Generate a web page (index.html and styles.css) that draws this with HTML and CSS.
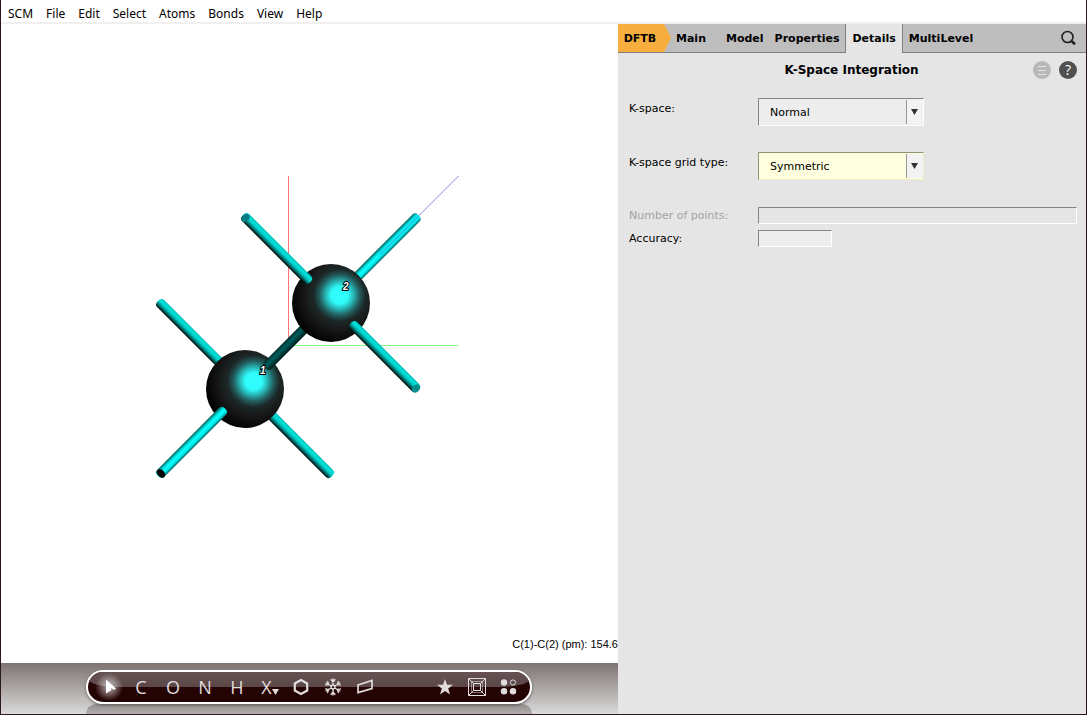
FILE: index.html
```html
<!DOCTYPE html>
<html lang="en">
<head>
<meta charset="utf-8">
<title>K-Space Integration</title>
<link rel="stylesheet" href="styles.css">
</head>
<body>
<div class="window">
  <nav class="menubar" aria-label="Main menu">
    <button type="button">SCM</button>
    <button type="button">File</button>
    <button type="button">Edit</button>
    <button type="button">Select</button>
    <button type="button">Atoms</button>
    <button type="button">Bonds</button>
    <button type="button">View</button>
    <button type="button">Help</button>
  </nav>
  <main class="workspace">
    <section class="viewer" aria-label="Structure">
      <div class="scene">
        <svg class="molecule" viewBox="1 24 617 639" role="img" aria-label="Two bonded carbon atoms">
          <defs>
            <radialGradient id="atom" cx="0.61" cy="0.4" r="0.64">
              <stop offset="0" stop-color="#30ffff"/>
              <stop offset="0.17" stop-color="#30fbfb"/>
              <stop offset="0.28" stop-color="#28b4b4"/>
              <stop offset="0.40" stop-color="#225f5f"/>
              <stop offset="0.52" stop-color="#1d2828"/>
              <stop offset="0.72" stop-color="#161616"/>
              <stop offset="1" stop-color="#000"/>
            </radialGradient>
            <linearGradient id="down" x1="0" y1="0" x2="0" y2="1">
              <stop offset="0" stop-color="#00b4b0"/>
              <stop offset="0.2" stop-color="#00e2dc"/>
              <stop offset="0.45" stop-color="#00cfca"/>
              <stop offset="0.75" stop-color="#006a68"/>
              <stop offset="1" stop-color="#000"/>
            </linearGradient>
            <linearGradient id="up" x1="0" y1="0" x2="0" y2="1">
              <stop offset="0" stop-color="#005c5c"/>
              <stop offset="0.3" stop-color="#00dede"/>
              <stop offset="0.5" stop-color="#10ffff"/>
              <stop offset="0.75" stop-color="#00e6e6"/>
              <stop offset="1" stop-color="#006060"/>
            </linearGradient>
            <linearGradient id="dark" x1="0" y1="0" x2="0" y2="1">
              <stop offset="0" stop-color="#002c2c"/>
              <stop offset="0.4" stop-color="#005e5e"/>
              <stop offset="1" stop-color="#001c1c"/>
            </linearGradient>
          </defs>
          <path d="M288.500 176V345" stroke="#ff7474"/>
          <path d="M294 345.500H458" stroke="#84f884"/>
          <rect x="0" y="-5" width="90" height="10" rx="4" fill="url(#down)" transform="translate(158 301) rotate(45)"/>
          <rect x="0" y="-5" width="92" height="10" rx="4" fill="url(#down)" transform="translate(267 411) rotate(45)"/>
          <rect x="0" y="-5" width="90" height="10" rx="4" fill="url(#up)" transform="translate(355 279) rotate(-45)"/>
          <path d="M380 254.500L458.500 176" stroke="#5858d8" stroke-width="0.7"/>
          <circle cx="245" cy="389" r="39" fill="url(#atom)"/>
          <rect x="0" y="-5" width="62" height="10" rx="4" fill="url(#dark)" transform="translate(265 368) rotate(-45)"/>
          <circle cx="331" cy="303" r="39" fill="url(#atom)"/>
          <rect x="0" y="-5" width="95" height="10" rx="4" fill="url(#down)" transform="translate(243 215) rotate(45)"/>
          <ellipse cx="245.500" cy="218" rx="4.500" ry="3.500" fill="#087e80" transform="rotate(-45 245.500 218)"/>
          <rect x="0" y="-5" width="95" height="10" rx="4" fill="url(#down)" transform="translate(351 323) rotate(45)"/>
          <ellipse cx="416" cy="388.500" rx="4.500" ry="3.500" fill="#088c8c" transform="rotate(-45 416 388.500)"/>
          <rect x="0" y="-5" width="95" height="10" rx="4" fill="url(#up)" transform="translate(158 476) rotate(-45)"/>
          <ellipse cx="161" cy="473.500" rx="3.500" ry="4.800" fill="#000" transform="rotate(-45 161 473.500)"/>
          <text class="atom-label" x="343" y="290">2</text>
          <text class="atom-label" x="260" y="374">1</text>
        </svg>
        <output class="measure">C(1)-C(2) (pm): 154.6</output>
      </div>
      <div class="dock">
        <div class="pill" role="toolbar" aria-label="Build tools">
          <button type="button" class="glow" aria-label="Pointer"><svg width="22" height="22" viewBox="0 0 22 22"><path d="M8 3.500L18 12.500L16 14L13 12L13.500 14L8 17.500Z" fill="#fff"/></svg></button>
          <button type="button">C</button>
          <button type="button">O</button>
          <button type="button">N</button>
          <button type="button">H</button>
          <button type="button" class="element-menu">X<svg width="7" height="6" viewBox="0 0 7 6"><path d="M0 0H7L3.500 6Z" fill="currentColor"/></svg></button>
          <button type="button" aria-label="Rings"><svg width="18" height="18" viewBox="0 0 18 18" fill="none" stroke="currentColor" stroke-width="2.200"><path d="M9 2L15.200 5.500V12.500L9 16L2.800 12.500V5.500Z"/></svg></button>
          <button type="button" aria-label="Crystal"><svg width="18" height="18" viewBox="-9 -9 18 18" fill="none" stroke="currentColor" stroke-width="1.400"><defs><path id="ray" d="M0 -2V-8.500M-2.300 -7.800L0 -5L2.300 -7.800M0 -2.200L1.900 -1.100"/></defs><use href="#ray"/><use href="#ray" transform="rotate(60)"/><use href="#ray" transform="rotate(120)"/><use href="#ray" transform="rotate(180)"/><use href="#ray" transform="rotate(240)"/><use href="#ray" transform="rotate(300)"/></svg></button>
          <button type="button" aria-label="Plane"><svg width="18" height="18" viewBox="0 0 18 18" fill="none" stroke="currentColor" stroke-width="1.700"><path d="M2 7L16 2.500V10.500L2 14.500Z"/></svg></button>
          <button type="button" class="favorite" aria-label="Favorites"><svg width="18" height="18" viewBox="0 0 18 18"><path d="M9 1L11 6.800H17L12.200 10.500L14 16.500L9 13L4 16.500L5.800 10.500L1 6.800H7Z" fill="currentColor"/></svg></button>
          <button type="button" aria-label="Periodic box"><svg width="18" height="18" viewBox="0 0 18 18" fill="none" stroke="currentColor"><path d="M0.500 0.500H17.500V17.500H0.500ZM5.500 5.500H12.500V12.500H5.500Z"/><path d="M3.500 3.500H14.500V14.500H3.500Z" stroke-opacity="0.5"/><path d="M0.500 0.500L5.500 5.500M17.500 0.500L12.500 5.500M0.500 17.500L5.500 12.500M17.500 17.500L12.500 12.500"/></svg></button>
          <button type="button" aria-label="Display style"><svg width="18" height="18" viewBox="0 0 18 18" fill="currentColor"><circle cx="4" cy="4.500" r="3.200"/><circle cx="13" cy="4.500" r="2.600" fill="none" stroke="currentColor"/><circle cx="4" cy="13.300" r="3.200"/><circle cx="13" cy="13.300" r="3.200"/></svg></button>
        </div>
        <div class="reflection"></div>
      </div>
    </section>
    <section class="panel" aria-label="Settings">
      <div class="tabs">
        <button type="button" class="tab engine">DFTB</button>
        <button type="button" class="tab main-tab">Main</button>
        <button type="button" class="tab model-tab">Model</button>
        <button type="button" class="tab">Properties</button>
        <button type="button" class="tab active">Details</button>
        <button type="button" class="tab">MultiLevel</button>
        <button type="button" class="search" aria-label="Search"><svg width="18" height="18" viewBox="0 0 18 18" fill="none" stroke="#222"><circle cx="8.500" cy="8" r="5.500" stroke-width="1.600"/><path d="M12.500 12L16 15.300" stroke-width="2.600"/></svg></button>
      </div>
      <header class="heading">
        <span></span>
        <h1>K-Space Integration</h1>
        <div class="actions">
          <button type="button" class="round pale" aria-label="Panel menu"><svg width="18" height="18" viewBox="0 0 18 18" stroke="#e6e6e6"><path d="M5 5.500H13M5 9.500H13M5 13.500H13"/></svg></button>
          <button type="button" class="round" aria-label="Help">?</button>
        </div>
      </header>
      <form class="fields">
        <div class="row">
          <label for="kspace">K-space:</label>
          <div class="combo">
            <select id="kspace"><option>Normal</option></select>
            <span class="drop"><svg width="7" height="6" viewBox="0 0 7 6"><path d="M0 0H7L3.500 6Z" fill="#333"/></svg></span>
          </div>
        </div>
        <div class="row">
          <label for="grid">K-space grid type:</label>
          <div class="combo changed">
            <select id="grid"><option>Symmetric</option></select>
            <span class="drop"><svg width="7" height="6" viewBox="0 0 7 6"><path d="M0 0H7L3.500 6Z" fill="#333"/></svg></span>
          </div>
        </div>
        <div class="row short">
          <label class="off" for="points">Number of points:</label>
          <input id="points" class="wide" type="text" disabled>
        </div>
        <div class="row short">
          <label for="accuracy">Accuracy:</label>
          <input id="accuracy" type="text">
        </div>
      </form>
    </section>
  </main>
</div>
</body>
</html>
```
FILE: styles.css
```css
* {
  box-sizing: border-box;
}

body {
  margin: 0;
  font: 11px/18px "DejaVu Sans", sans-serif;
  color: #000;
}

button,
input,
select {
  margin: 0;
  padding: 0;
  border: 0;
  border-radius: 0;
  background: none;
  font: inherit;
  color: inherit;
}

svg {
  display: block;
}

.window {
  display: flex;
  flex-direction: column;
  min-height: 100vh;
  border: 1px solid #2b1820;
  border-top: 0;
  background: #fff;
}

.menubar {
  display: flex;
  gap: 13px;
  padding: 5px 7px 0;
  border-bottom: 2px solid #f0f0f0;
  font: 12px/17px "Noto Sans", sans-serif;
}

.workspace {
  display: flex;
  flex: 1;
}

.viewer {
  display: flex;
  flex: 1;
  flex-direction: column;
  min-width: 0;
}

.scene {
  position: relative;
  flex: 1;
  overflow: hidden;
}

.molecule {
  position: absolute;
  inset: 0;
  width: 100%;
  height: 100%;
}

.atom-label {
  font: italic bold 10px "Liberation Sans", sans-serif;
  fill: #fff;
  stroke: #000;
  stroke-width: 2px;
  paint-order: stroke;
}

.measure {
  position: absolute;
  right: 0;
  bottom: 10px;
  font: 11px/18px "Liberation Sans", sans-serif;
}

.dock {
  padding: 7px 86px 0 85px;
  overflow: hidden;
  background: linear-gradient(#7e7472, #a39d9b 40%, #dadada);
}

.pill {
  position: relative;
  display: flex;
  align-items: center;
  height: 34px;
  padding: 0 5px;
  border: 2px solid #fff;
  border-radius: 17px;
  overflow: hidden;
  background: linear-gradient(#2a0505, #220202);
  box-shadow: 0 1px 3px #555;
  color: #e0dcdc;
  font: 18px/30px "Open Sans", sans-serif;
}

.pill::before {
  content: "";
  position: absolute;
  inset: 0 0 50%;
  border-radius: 0 0 32px 32px / 0 0 8px 8px;
  background: linear-gradient(#665252, #5b4747);
}

.pill button {
  position: relative;
  display: flex;
  align-items: center;
  justify-content: center;
  width: 32px;
  height: 30px;
}

.pill .glow {
  background: radial-gradient(circle, #ffffffb0, #ffffff00 14px);
}

.pill .element-menu {
  padding-left: 2px;
}

.element-menu svg {
  margin-top: 10px;
}

.pill .favorite {
  margin-left: auto;
}

.reflection {
  height: 10px;
  border-top: 1px solid #989292;
  border-radius: 17px 17px 0 0;
  background: linear-gradient(#979191, #b2aeae);
}

.panel {
  display: flex;
  flex-direction: column;
  flex: 0 0 468px;
  background: #e5e5e5;
}

.tabs {
  display: flex;
  height: 29px;
  border-bottom: 1px solid #808080;
  background: #bebebe;
}

.tab {
  padding: 1px 5px 0;
  font-weight: bold;
}

.tab:nth-child(n + 4) {
  padding-right: 6px;
  padding-left: 6px;
}

.engine {
  width: 53px;
  padding-right: 14px;
  background: #f7ae3e;
  clip-path: polygon(0 0, 46px 0, 100% 50%, 46px 100%, 0 100%);
}

.main-tab {
  margin-right: 10px;
}

.active {
  height: 29px;
  padding-bottom: 1px;
  border: 1px solid #808080;
  border-width: 0 1px;
  background: #e5e5e5;
}

.search {
  margin: 0 9px 0 auto;
}

.heading {
  display: grid;
  grid-template-columns: 60px 1fr 60px;
  align-items: center;
  padding: 8px 9px 8px 8px;
}

.heading h1 {
  margin: 0;
  font-size: 12px;
  text-align: center;
}

.actions {
  display: flex;
  justify-content: flex-end;
  gap: 8px;
}

.round {
  width: 18px;
  height: 18px;
  border-radius: 50%;
  background: #505050;
  color: #fff;
  font: 14px/18px "Open Sans", sans-serif;
}

.pale {
  background: #b8b8b8;
}

.fields {
  display: flex;
  flex-direction: column;
  padding: 11px 9px 11px 11px;
}

.row {
  display: grid;
  grid-template-columns: 129px 1fr;
  align-items: start;
  min-height: 54px;
  line-height: 22px;
}

.short {
  min-height: 23px;
  padding-top: 1px;
  line-height: 18px;
}

.off {
  color: #a3a3a3;
}

.combo {
  position: relative;
  width: 166px;
}

.combo select {
  display: block;
  width: 100%;
  height: 28px;
  padding: 1px 0 0 11px;
  border: 1px solid #fff;
  border-top-color: #858585;
  border-left-color: #858585;
  background: #ededed;
  appearance: none;
}

.combo.changed select {
  border-color: #929276 #eeeec0 #eeeec0 #929276;
  background: #ffffdf;
}

.drop {
  position: absolute;
  top: 2px;
  right: 1px;
  bottom: 2px;
  display: grid;
  place-items: center;
  width: 17px;
  padding-right: 1px;
  border-left: 1px solid #999;
  background: #f3f3f3;
  pointer-events: none;
}

.row input {
  width: 74px;
  height: 17px;
  border: 1px solid #fff;
  border-top-color: #858585;
  border-left-color: #858585;
  background: #ededed;
}

.row .wide {
  width: 100%;
  background: #e5e5e5;
}
```
